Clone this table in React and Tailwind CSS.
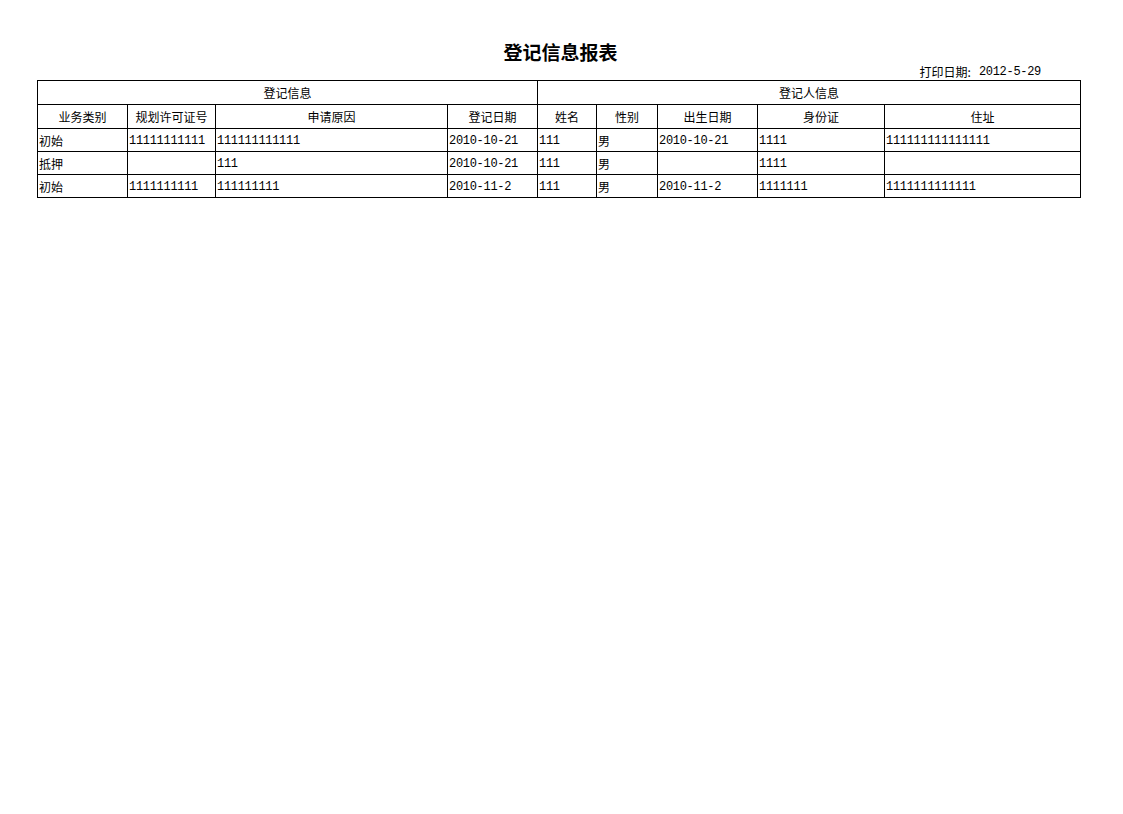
import React from "react";

const heads = ["业务类别", "规划许可证号", "申请原因", "登记日期", "姓名", "性别", "出生日期", "身份证", "住址"];
const rows = [
  ["初始", "11111111111", "111111111111", "2010-10-21", "111", "男", "2010-10-21", "1111", "111111111111111"],
  ["抵押", "", "111", "2010-10-21", "111", "男", "", "1111", ""],
  ["初始", "1111111111", "111111111", "2010-11-2", "111", "男", "2010-11-2", "1111111", "1111111111111"],
];

function isCjk(s) {
  return /[\u4e00-\u9fff]/.test(s);
}

const cjkCls = "font-['Noto_Sans_CJK_SC','Noto_Sans',sans-serif] text-[12px]";
const monoCls = "font-['Liberation_Mono','Noto_Sans_CJK_SC',monospace] text-[12px] tracking-[-0.3px]";

export default function App() {
  return (
    <div className="w-[1123px] h-[814px] bg-white text-black overflow-hidden">
      <div className="pl-[37px] pt-[39px] w-[1081px]">
        <div className="h-[25px] flex items-center justify-center pl-[3px] text-[19px] font-bold leading-none font-['Noto_Sans_CJK_SC',sans-serif]">
          登记信息报表
        </div>
        <div className="h-[16px] flex items-center justify-end pr-[40px] leading-none">
          <span className={cjkCls}>打印日期:</span>
          <span className={"ml-[8px] " + monoCls}>2012-5-29</span>
        </div>
        <table className="border-collapse table-fixed w-[1044px]">
          <colgroup>
            <col className="w-[90px]" />
            <col className="w-[88px]" />
            <col className="w-[232px]" />
            <col className="w-[90px]" />
            <col className="w-[59px]" />
            <col className="w-[61px]" />
            <col className="w-[100px]" />
            <col className="w-[127px]" />
            <col className="w-[196px]" />
          </colgroup>
          <tbody>
            <tr className="h-[24px]">
              <td colSpan={4} className={"border border-black text-center p-0 leading-none " + cjkCls}>
                登记信息
              </td>
              <td colSpan={5} className={"border border-black text-center p-0 leading-none " + cjkCls}>
                登记人信息
              </td>
            </tr>
            <tr className="h-[24px]">
              {heads.map((h, i) => (
                <td key={i} className={"border border-black text-center p-0 leading-none " + cjkCls}>
                  {h}
                </td>
              ))}
            </tr>
            {rows.map((r, ri) => (
              <tr key={ri} className="h-[23px]">
                {r.map((c, ci) => (
                  <td
                    key={ci}
                    className={
                      "border border-black text-left px-[1px] pt-[1px] pb-0 leading-none whitespace-nowrap " +
                      (isCjk(c) ? cjkCls : monoCls)
                    }
                  >
                    {c}
                  </td>
                ))}
              </tr>
            ))}
          </tbody>
        </table>
      </div>
    </div>
  );
}
